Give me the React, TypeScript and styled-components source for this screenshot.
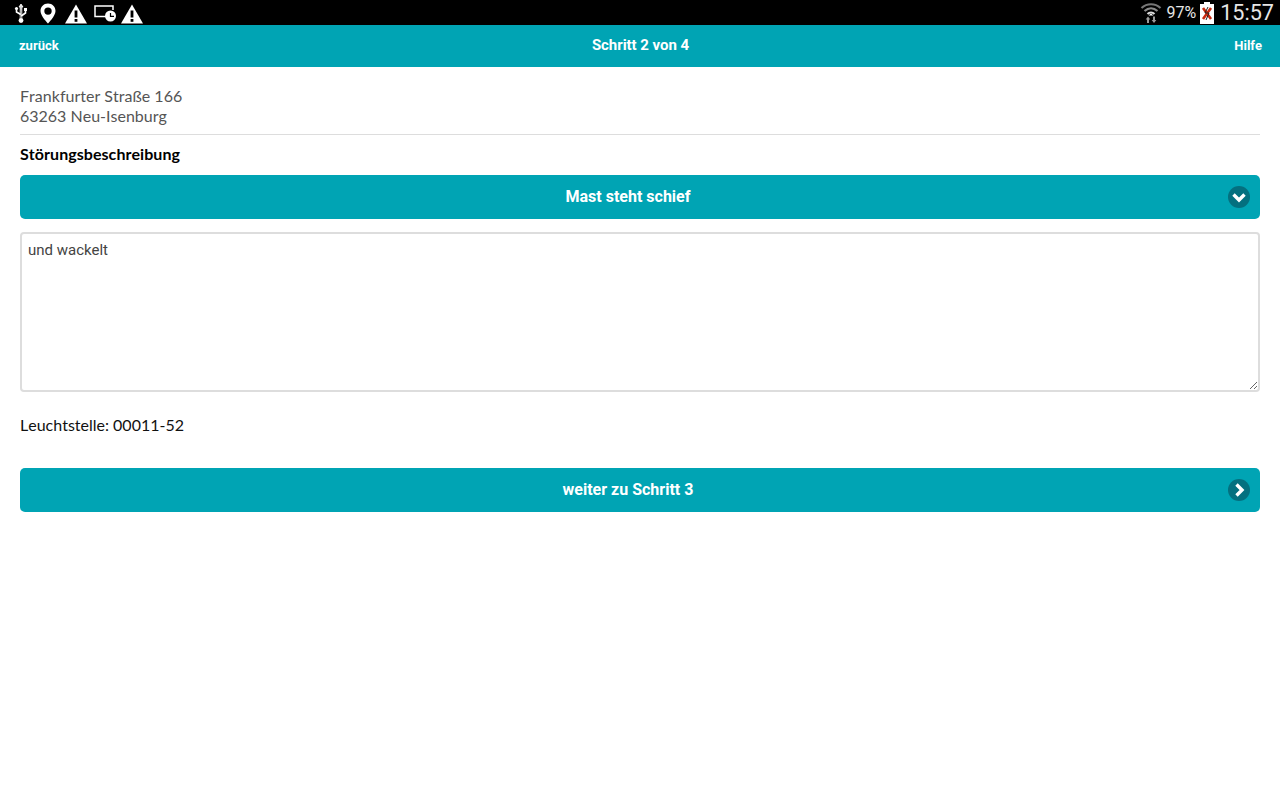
import { createGlobalStyle, styled } from "styled-components";

const GlobalStyle = createGlobalStyle`
  html, body { margin: 0; padding: 0; background: #fff; }
  body { font-family: "Lato", "Liberation Sans", sans-serif; font-kerning: none; }
`;

const Warning = () => (
  <svg width="22" height="20" viewBox="0 0 22 20">
    <path d="M11 0.5 L22 19.5 H0 Z" fill="#fff" />
    <rect x="9.6" y="6.5" width="2.8" height="7" fill="#000" />
    <rect x="9.6" y="15" width="2.8" height="2.8" fill="#000" />
  </svg>
);

export default function App() {
  return (
    <Page>
      <GlobalStyle />
      <StatusBar>
        <StatusLeft>
          <svg width="14" height="21" viewBox="0 0 14 21">
            <path d="M7 1 L9 4 H7.8 V15 M7 1 L5 4 H6.2 V15" fill="#fff" stroke="#fff" strokeWidth="0.8" />
            <circle cx="7" cy="17.5" r="2.4" fill="#fff" />
            <path d="M7.2 13 L11.5 10 V7.5 M6.8 11.5 L2.5 9 V6.5" fill="none" stroke="#fff" strokeWidth="1.6" />
            <rect x="10" y="5" width="3" height="3" fill="#fff" />
            <circle cx="2.5" cy="5.5" r="1.6" fill="#fff" />
          </svg>
          <svg width="16" height="21" viewBox="0 0 16 21">
            <path fillRule="evenodd" d="M8 0.5 C3.6 0.5 0.5 3.8 0.5 8 C0.5 13 8 20.5 8 20.5 C8 20.5 15.5 13 15.5 8 C15.5 3.8 12.4 0.5 8 0.5 Z M8 4.4 A3.7 3.7 0 1 1 8 11.8 A3.7 3.7 0 1 1 8 4.4 Z" fill="#fff" />
          </svg>
          <Warning />
          <svg width="22" height="17" viewBox="0 0 22 17">
            <path d="M12 11.5 H1 V1 H19 V5" fill="none" stroke="#fff" strokeWidth="1.5" />
            <circle cx="16.5" cy="11" r="5.5" fill="#fff" />
            <path d="M16.5 8 V11.4 H20" fill="none" stroke="#000" strokeWidth="1.2" />
          </svg>
          <Warning />
        </StatusLeft>
        <StatusRight>
          <svg width="22" height="22" viewBox="0 0 22 22">
            <path d="M1.5 6 C7 1 15 1 20.5 6" fill="none" stroke="#777" strokeWidth="2.2" />
            <path d="M4.5 9 C8.5 5.5 13.5 5.5 17.5 9" fill="none" stroke="#8a8a8a" strokeWidth="2.2" />
            <path d="M7.5 12 C9.5 10.2 12.5 10.2 14.5 12" fill="none" stroke="#ddd" strokeWidth="2.2" />
            <path d="M8.5 13.5 L11 11.5 L13.5 13.5 Z" fill="#fff" />
            <path d="M8 14.5 L10.3 17.5 H9 V21 H7 V17.5 H5.7 Z" fill="#9a9a9a" />
            <path d="M14 21 L16.3 18 H15 V14.5 H13 V18 H11.7 Z" fill="#9a9a9a" />
          </svg>
          <Percent>97%</Percent>
          <svg width="14" height="22" viewBox="0 0 14 22">
            <rect x="0" y="2" width="14" height="20" fill="#fff" />
            <rect x="4" y="0" width="6" height="2" fill="#fff" />
            <path d="M3 6 L11 17 M11 6 L3 17" stroke="#c8290f" strokeWidth="2.6" />
            <path d="M8 5 L5 11 H9 L6 18" fill="none" stroke="#222" strokeWidth="1" />
          </svg>
          <Clock>15:57</Clock>
        </StatusRight>
      </StatusBar>

      <Header>
        <HeaderLink>zurück</HeaderLink>
        <HeaderTitle>Schritt 2 von 4</HeaderTitle>
        <HeaderLink $right>Hilfe</HeaderLink>
      </Header>

      <Content>
        <Address>
          Frankfurter Straße 166
          <br />
          63263 Neu-Isenburg
        </Address>
        <Divider />
        <SectionLabel>Störungsbeschreibung</SectionLabel>
        <ActionButton>
          Mast steht schief
          <ButtonIcon>
            <svg width="22" height="22" viewBox="0 0 22 22">
              <circle cx="11" cy="11" r="11" fill="#04707f" />
              <path d="M5.5 8.5 L11 14 L16.5 8.5" fill="none" stroke="#fff" strokeWidth="3.4" />
            </svg>
          </ButtonIcon>
        </ActionButton>
        <Description defaultValue="und wackelt" />
        <LampInfo>Leuchtstelle: 00011-52</LampInfo>
        <ActionButton>
          weiter zu Schritt 3
          <ButtonIcon>
            <svg width="22" height="22" viewBox="0 0 22 22">
              <circle cx="11" cy="11" r="11" fill="#04707f" />
              <path d="M8.5 5.5 L14 11 L8.5 16.5" fill="none" stroke="#fff" strokeWidth="3.4" />
            </svg>
          </ButtonIcon>
        </ActionButton>
      </Content>
    </Page>
  );
}

const Page = styled.div`
  width: 1280px;
  height: 800px;
  overflow: hidden;
  background: #fff;
`;

const StatusBar = styled.div`
  height: 25px;
  background: #000;
  display: flex;
  justify-content: space-between;
  align-items: center;
  padding: 0 6px 0 14px;
`;

const StatusLeft = styled.div`
  display: flex;
  align-items: center;
  padding-top: 2px;
  & > svg:nth-child(1) { margin-right: 12px; }
  & > svg:nth-child(2) { margin-right: 9px; }
  & > svg:nth-child(3) { margin-right: 7px; }
  & > svg:nth-child(4) { margin-right: 5px; }
`;

const StatusRight = styled.div`
  display: flex;
  align-items: center;
`;

const Percent = styled.span`
  font-family: "Roboto", sans-serif;
  font-size: 16px;
  color: #e6e6e6;
  margin-left: 5px;
  margin-right: 4px;
`;

const Clock = styled.span`
  font-family: "Roboto", sans-serif;
  font-size: 21.6px;
  color: #e6e6e6;
  margin-left: 6px;
`;

const Header = styled.div`
  height: 42px;
  background: #00a4b4;
  display: grid;
  grid-template-columns: 1fr auto 1fr;
  align-items: center;
  padding: 0 18px 2px 19px;
  box-sizing: border-box;
  color: #fff;
  font-family: "Roboto", sans-serif;
  font-weight: 700;
`;

const HeaderLink = styled.span<{ $right?: boolean }>`
  font-size: 13px;
  text-align: ${(p) => (p.$right ? "right" : "left")};
`;

const HeaderTitle = styled.span`
  font-size: 15px;
  letter-spacing: -0.05px;
`;

const Content = styled.div`
  padding: 19px 20px 0;
  display: flex;
  flex-direction: column;
`;

const Address = styled.div`
  font-size: 16px;
  line-height: 20px;
  color: #555;
`;

const Divider = styled.div`
  height: 1px;
  background: #ddd;
  margin-top: 8px;
`;

const SectionLabel = styled.div`
  font-size: 16px;
  font-weight: 700;
  line-height: 20px;
  letter-spacing: 0.05px;
  color: #000;
  margin-top: 9px;
`;

const ActionButton = styled.div`
  position: relative;
  height: 44px;
  box-sizing: border-box;
  margin-top: 11px;
  border-radius: 5px;
  background: #00a4b4;
  color: #fff;
  font-family: "Roboto", sans-serif;
  font-weight: 700;
  font-size: 16px;
  display: flex;
  align-items: center;
  justify-content: center;
  padding: 0 24px 2px 0;
  &:last-child { margin-top: 33px; }
`;

const ButtonIcon = styled.span`
  position: absolute;
  right: 10px;
  top: 11px;
  height: 22px;
  & > svg { display: block; }
`;

const Description = styled.textarea`
  box-sizing: border-box;
  display: block;
  width: 1240px;
  height: 160px;
  margin-top: 13px;
  padding: 6px 6px;
  border: 2px solid #ddd;
  border-radius: 4px;
  outline: none;
  font-family: "Roboto", sans-serif;
  font-size: 15px;
  line-height: 20px;
  color: #444;
`;

const LampInfo = styled.div`
  font-size: 16px;
  line-height: 20px;
  color: #111;
  margin-top: 23px;
`;
